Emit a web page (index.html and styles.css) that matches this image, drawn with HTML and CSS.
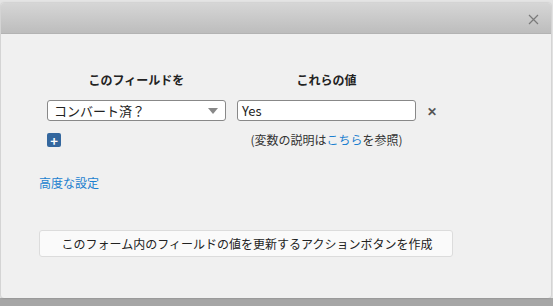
FILE: index.html
```html
<!DOCTYPE html>
<html lang="ja">
<head>
    <meta charset="UTF-8">
    <title>フィールド更新アクション</title>
    <link rel="stylesheet" href="styles.css">
</head>
<body>
    <div class="dialog">
        <div class="dialog-header">
            <svg class="dialog-close" width="11" height="11" viewBox="0 0 11 11">
                <path d="M1 1 L10 10 M10 1 L1 10" stroke="#7a7a7a" stroke-width="1.2" fill="none"/>
            </svg>
        </div>
        <div class="dialog-body">
            <div class="field-table">
                <div class="col-title">このフィールドを</div>
                <div class="col-title">これらの値</div>
                <div></div>

                <div class="select">
                    <span>コンバート済？</span>
                    <span class="select-arrow"></span>
                </div>
                <div class="text-input">Yes</div>
                <div class="remove">&#x2715;</div>

                <div class="add-cell"><span class="add-btn">+</span></div>
                <div class="hint">(変数の説明は<a href="#">こちら</a>を参照)</div>
                <div></div>
            </div>

            <a class="advanced" href="#">高度な設定</a>

            <div class="action-btn">このフォーム内のフィールドの値を更新するアクションボタンを作成</div>
        </div>
    </div>
</body>
</html>
```

FILE: styles.css
```css
body {
    margin: 0;
    height: 306px;
    overflow: hidden;
    background-color: #a9a9a9;
    background-image: linear-gradient(#e4e4e4 0, #e4e4e4 298px, #a6a6a6 298px);
    font-family: "Noto Sans CJK JP", "Noto Sans", sans-serif;
    font-size: 12px;
    color: #222;
}
a {
    color: #1b7fcf;
    text-decoration: none;
}
.dialog {
    width: 550px;
    height: 295px;
    margin: 3px 0 0 1px;
    background-color: #f0f0f0;
    border-radius: 3px;
    box-shadow: 0 0 2px rgba(0, 0, 0, 0.25);
    overflow: hidden;
}
.dialog-header {
    height: 30px;
    display: flex;
    align-items: center;
    justify-content: flex-end;
    padding-right: 12px;
    background: linear-gradient(#d6d6d6, #bdbdbd);
    border-bottom: 1px solid #b3b3b3;
}
.dialog-close {
    display: block;
    margin-top: 2px;
}
.dialog-body {
    padding: 38px 0 0 38px;
}
.field-table {
    display: grid;
    grid-template-columns: 179px 179px 20px;
    column-gap: 11px;
    row-gap: 11px;
    margin-left: 8px;
    align-items: center;
}
.col-title {
    text-align: center;
    font-weight: bold;
    line-height: 16px;
    margin-bottom: 1px;
}
.select,
.text-input {
    height: 19px;
    box-sizing: content-box;
    border: 1px solid #888;
    border-radius: 3px;
    background-color: #fff;
    font-size: 13px;
    line-height: 19px;
    padding: 0 6px;
}
.text-input {
    padding-left: 4px;
}
.select {
    display: flex;
    justify-content: space-between;
    align-items: center;
}
.select-arrow {
    width: 0;
    height: 0;
    border-left: 5px solid transparent;
    border-right: 5px solid transparent;
    border-top: 6px solid #888;
    margin-right: 1px;
}
.remove {
    color: #555;
    font-size: 12px;
    font-weight: bold;
}
.add-cell {
    display: flex;
    align-items: center;
}
.add-btn {
    display: flex;
    width: 14px;
    height: 14px;
    align-items: center;
    justify-content: center;
    background-color: #34679e;
    border-radius: 2px;
    color: #fff;
    font-weight: bold;
    font-size: 13px;
    line-height: 1;
}
.hint {
    text-align: center;
    line-height: 16px;
    color: #333;
}
.advanced {
    display: block;
    width: max-content;
    margin-top: 27px;
    line-height: 16px;
}
.action-btn {
    width: 410px;
    height: 25px;
    margin-top: 39px;
    border: 1px solid #dcdcdc;
    border-radius: 3px;
    background-color: #fafafa;
    display: flex;
    align-items: center;
    justify-content: center;
    padding-left: 2px;
    color: #222;
}
```
